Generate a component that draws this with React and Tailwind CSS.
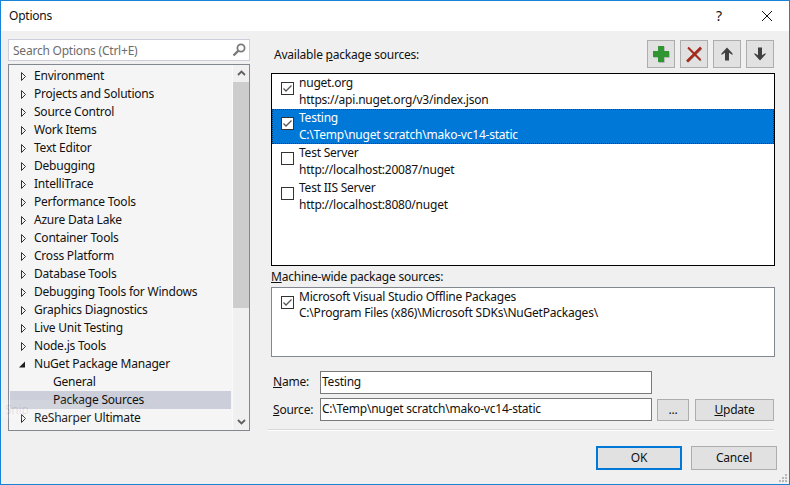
const treeItems = [
  ['Environment', 'c'], ['Projects and Solutions', 'c'], ['Source Control', 'c'], ['Work Items', 'c'], ['Text Editor', 'c'],
  ['Debugging', 'c'], ['IntelliTrace', 'c'], ['Performance Tools', 'c'], ['Azure Data Lake', 'c'], ['Container Tools', 'c'],
  ['Cross Platform', 'c'], ['Database Tools', 'c'], ['Debugging Tools for Windows', 'c'], ['Graphics Diagnostics', 'c'],
  ['Live Unit Testing', 'c'], ['Node.js Tools', 'c'], ['NuGet Package Manager', 'o'], ['General', 'n'], ['Package Sources', 's'], ['ReSharper Ultimate', 'c'],
];

const sources = [
  { name: 'nuget.org', url: 'https://api.nuget.org/v3/index.json', checked: true },
  { name: 'Testing', url: 'C:\\Temp\\nuget scratch\\mako-vc14-static', checked: true, selected: true },
  { name: 'Test Server', url: 'http://localhost:20087/nuget', checked: false },
  { name: 'Test IIS Server', url: 'http://localhost:8080/nuget', checked: false },
];

function Arrow({ open }) {
  return open ? (
    <svg width="8" height="9" viewBox="0 0 8 9" className="shrink-0"><path d="M7 1.5V7.5H1Z" fill="#1e1e1e" /></svg>
  ) : (
    <svg width="8" height="11" viewBox="0 0 8 11" className="shrink-0"><path d="M2.5 1.5L6.5 5.5L2.5 9.5Z" fill="none" stroke="#333" strokeWidth="1" /></svg>
  );
}

function Check({ checked }) {
  return (
    <div className="w-[13px] h-[13px] border border-[#333] bg-white shrink-0 flex items-center justify-center">
      {checked && (
        <svg width="11" height="11" viewBox="0 0 11 11"><path d="M1.5 5.5L4 8L9.5 2.5" fill="none" stroke="#555" strokeWidth="1.3" /></svg>
      )}
    </div>
  );
}

function SourceRow({ name, url, checked, selected, tight }) {
  return (
    <div className={`h-[35px] flex items-start pl-[9px] ${selected ? 'bg-[#0078d7] text-white outline-1 -outline-offset-1 outline-dotted outline-[#0b3a66]' : 'text-[#111]'}`}>
      <div className="pt-[8px]"><Check checked={checked} /></div>
      <div className="ml-[5px] flex flex-col">
        <div className="h-[17px] leading-[18px]">{name}</div>
        <div className={`leading-[18px] ${tight ? 'h-[16px] -mt-px' : 'h-[17px]'}`}>{url}</div>
      </div>
    </div>
  );
}

function ToolButton({ children }) {
  return (
    <div className="w-[28px] h-[28px] bg-[#e1e1e1] border border-[#adadad] flex items-center justify-center">{children}</div>
  );
}

function Button({ className, children }) {
  return <div className={`flex items-center justify-center bg-[#e1e1e1] border border-[#adadad] text-[#111] ${className}`}>{children}</div>;
}

export default function App() {
  return (
    <div className="w-[790px] h-[485px] border border-[#1883d7] bg-[#f0f0f0] flex flex-col text-[12px] tracking-[-0.22px] text-[#111] overflow-hidden relative" style={{ fontFamily: '"Noto Sans", "Open Sans", sans-serif' }}>
      <div className="h-[30px] bg-white flex items-center justify-between shrink-0 pl-[8px]">
        <span className="text-[12px] -mt-px">Options</span>
        <div className="flex items-center">
          <span className="text-[14px] w-[46px] text-center mr-[2px] -mt-px">?</span>
          <svg width="46" height="14" viewBox="0 0 46 14" className="mr-[-1px]"><path d="M18 2L28 12M28 2L18 12" stroke="#111" strokeWidth="1" fill="none" /></svg>
        </div>
      </div>

      <div className="flex flex-1 min-h-0">
        <div className="w-[242px] ml-[7px] mt-[8px] flex flex-col shrink-0">
          <div className="h-[22px] bg-white border border-[#cccedb] flex items-center justify-between pl-[4px] pr-[2px] text-[#6d6d6d]">
            <span className="mt-px">Search Options (Ctrl+E)</span>
            <svg width="16" height="16" viewBox="0 0 16 16"><circle cx="10" cy="6" r="3.6" fill="none" stroke="#7a7a7a" strokeWidth="1.8" /><path d="M7.5 8.5L2.5 13.5" stroke="#7a7a7a" strokeWidth="2.4" /></svg>
          </div>
          <div className="mt-[3px] h-[367px] border border-[#828790] bg-[#f5f5f5] flex pl-px">
            <div className="w-[221px] pt-[2px]">
              {treeItems.map(([label, kind]) => (
                <div key={label} className={`h-[18px] flex items-center leading-[18px] ${kind === 's' ? 'bg-[#ccced9]' : ''}`}>
                  {kind === 'c' && <div className="w-[24px] pl-[9px]"><Arrow /></div>}
                  {kind === 'o' && <div className="w-[24px] pl-[8px]"><Arrow open /></div>}
                  {(kind === 'n' || kind === 's') && <div className="w-[43px]" />}
                  <span className="whitespace-nowrap">{label}</span>
                </div>
              ))}
            </div>
            <div className="ml-px w-[17px] bg-[#f0f0f0] flex flex-col items-center border-l border-[#fafafa]">
              <div className="h-[17px] w-full flex items-center justify-center shrink-0">
                <svg width="9" height="7" viewBox="0 0 9 7"><path d="M1 5L4.5 1.5L8 5" fill="none" stroke="#606060" strokeWidth="1.8" /></svg>
              </div>
              <div className="w-full h-[226px] bg-[#cdcdcd]" />
              <div className="flex-1" />
              <div className="h-[17px] w-full flex items-center justify-center shrink-0">
                <svg width="9" height="7" viewBox="0 0 9 7"><path d="M1 2L4.5 5.5L8 2" fill="none" stroke="#606060" strokeWidth="1.8" /></svg>
              </div>
            </div>
          </div>
        </div>

        <div className="ml-[18px] w-[510px] flex flex-col shrink-0">
          <div className="h-[28px] mt-[9px] flex items-center justify-between pl-[6px] pr-[4px]">
            <span className="mt-[2px]">Available <span className="underline">p</span>ackage sources:</span>
            <div className="flex gap-[5px]">
              <ToolButton>
                <svg width="18" height="18" viewBox="0 0 18 18">
                  <path d="M6 1H12V6H17V12H12V17H6V12H1V6H6Z" fill="#a9a9a9" transform="translate(0.7 0.7)" />
                  <path d="M6 1H12V6H17V12H12V17H6V12H1V6H6Z" fill="#2f9631" />
                </svg>
              </ToolButton>
              <ToolButton>
                <svg width="18" height="18" viewBox="0 0 18 18">
                  <path d="M3.5 3L16 16M16.5 4L3 17" stroke="#a0a0a0" strokeWidth="1.6" fill="none" />
                  <path d="M3 2.5L15.5 15" stroke="#a5281b" strokeWidth="1.9" fill="none" />
                  <path d="M16 2.5L2 16.5" stroke="#a5281b" strokeWidth="2.5" fill="none" />
                </svg>
              </ToolButton>
              <ToolButton>
                <svg width="16" height="16" viewBox="0 0 16 16"><path d="M8 1.5L13.5 7.5V9L10 6.8V14.5H6V6.8L2.5 9V7.5Z" fill="#3f3f3f" /></svg>
              </ToolButton>
              <ToolButton>
                <svg width="16" height="16" viewBox="0 0 16 16"><path d="M8 14.5L13.5 8.5V7L10 9.2V1.5H6V9.2L2.5 7V8.5Z" fill="#3f3f3f" /></svg>
              </ToolButton>
            </div>
          </div>

          <div className="mt-[5px] ml-[3px] w-[504px] h-[193px] bg-white border border-black">
            {sources.map((s) => <SourceRow key={s.name} {...s} />)}
          </div>

          <div className="ml-[3px] h-[21px] flex items-center"><span><span className="underline">M</span>achine-wide package sources:</span></div>

          <div className="ml-[3px] w-[504px] h-[70px] bg-white border border-[#828790]">
            <SourceRow name="Microsoft Visual Studio Offline Packages" url="C:\Program Files (x86)\Microsoft SDKs\NuGetPackages\" checked tight />
          </div>

          <div className="mt-[14px] h-[23px] flex items-center">
            <span className="ml-[5px] w-[47px] -mt-px"><span className="underline">N</span>ame:</span>
            <div className="w-[332px] h-[23px] bg-white border border-[#7a7a7a] flex items-center pl-px pb-px">Testing</div>
          </div>
          <div className="mt-[4px] h-[23px] flex items-center">
            <span className="ml-[5px] w-[47px]"><span className="underline">S</span>ource:</span>
            <div className="w-[332px] h-[23px] bg-white border border-[#7a7a7a] flex items-center pl-px pb-px whitespace-nowrap">C:\Temp\nuget scratch\mako-vc14-static</div>
            <Button className="ml-[5px] w-[32px] h-[22px] mt-px">...</Button>
            <Button className="ml-[6px] w-[79px] h-[22px] mt-px"><span><span className="underline">U</span>pdate</span></Button>
          </div>

          <div className="mt-[8px] w-[506px] h-[2px] bg-[#d8d8d8] border-b border-white" />

          <div className="mt-[15px] flex pl-[328px] gap-[9px]">
            <Button className="w-[86px] h-[24px] !border-2 !border-[#0078d7]">OK</Button>
            <Button className="w-[86px] h-[24px]">Cancel</Button>
          </div>
        </div>
      </div>

      <div className="absolute left-0 top-[399px] w-[88px] h-[19px] bg-white/10 pl-[4px] text-[12px] leading-[19px] text-black/10">Snip</div>

      <svg width="12" height="12" viewBox="0 0 12 12" className="absolute right-0 bottom-0">
        <g fill="#b8b8b8"><rect x="8" y="2" width="2" height="2" /><rect x="5" y="5" width="2" height="2" /><rect x="8" y="5" width="2" height="2" /><rect x="2" y="8" width="2" height="2" /><rect x="5" y="8" width="2" height="2" /><rect x="8" y="8" width="2" height="2" /></g>
      </svg>
    </div>
  );
}
